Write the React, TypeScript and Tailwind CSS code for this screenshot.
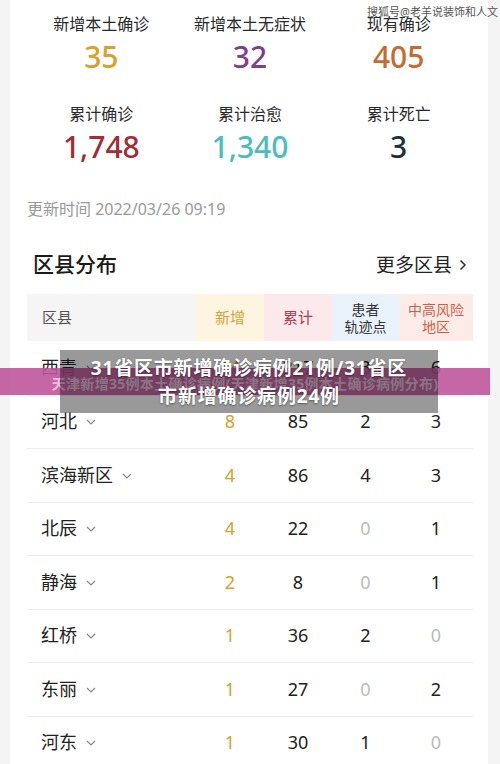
import React from "react";

const FONT = { fontFamily: '"Noto Sans", "Noto Sans CJK SC", sans-serif' };

type Stat = { label: string; value: string; color: string };
const stats1: Stat[] = [
  { label: "新增本土确诊", value: "35", color: "text-[#d9a02a]" },
  { label: "新增本土无症状", value: "32", color: "text-[#7d3e8e]" },
  { label: "现有确诊", value: "405", color: "text-[#c86a2f]" },
];
const stats2: Stat[] = [
  { label: "累计确诊", value: "1,748", color: "text-[#a52b36]" },
  { label: "累计治愈", value: "1,340", color: "text-[#4cbdbd]" },
  { label: "累计死亡", value: "3", color: "text-[#1e3040]" },
];

const rows = [
  ["西青", "14", "217", "3", "6"],
  ["河北", "8", "85", "2", "3"],
  ["滨海新区", "4", "86", "4", "3"],
  ["北辰", "4", "22", "0", "1"],
  ["静海", "2", "8", "0", "1"],
  ["红桥", "1", "36", "2", "0"],
  ["东丽", "1", "27", "0", "2"],
  ["河东", "1", "30", "1", "0"],
];

function Chevron() {
  return (
    <svg width="10" height="6" viewBox="0 0 10 6" className="ml-[9px] mt-[1px]">
      <polyline points="1,1 5,5 9,1" fill="none" stroke="#888" strokeWidth="1.2" />
    </svg>
  );
}

function StatRow({ items, gapTop }: { items: Stat[]; gapTop: string }) {
  return (
    <div className={`grid grid-cols-3 ${gapTop}`}>
      {items.map((s) => (
        <div key={s.label} className="flex flex-col items-center">
          <div className="h-[22px] leading-[22px] text-[16px] text-[#2a2a2a]">{s.label}</div>
          <div className={`mt-[4px] h-[36px] leading-[36px] text-[30px] font-medium ${s.color}`}>{s.value}</div>
        </div>
      ))}
    </div>
  );
}

function Num({ v, gold }: { v: string; gold?: boolean }) {
  const color = gold ? "text-[#d9a02a]" : v === "0" ? "text-[#bbbbbb]" : "text-[#222]";
  return <div className={`flex items-center justify-center text-[18px] ${color}`}>{v}</div>;
}

export default function App() {
  return (
    <div className="relative w-[500px] h-[764px] overflow-hidden bg-[#f4f4f4] pl-[10px] pr-[12px]" style={FONT}>
      <div className="h-full bg-white pl-[17px] pr-[15px]">
        <StatRow items={stats1} gapTop="pt-[13px]" />
        <StatRow items={stats2} gapTop="pt-[28px]" />
        <div className="mt-[34px] h-[20px] leading-[20px] text-[16px] text-[#9a9a9a]">更新时间 2022/03/26 09:19</div>
        <div className="mt-[32px] flex items-center justify-between h-[28px] pl-[6px]">
          <div className="text-[21px] font-medium text-[#1a1a1a]">区县分布</div>
          <div className="flex items-center text-[19px] text-[#222] pr-[6px]">
            更多区县
            <svg width="8" height="12" viewBox="0 0 8 12" className="ml-[7px]">
              <polyline points="1.5,1.5 6,6 1.5,10.5" fill="none" stroke="#333" strokeWidth="1.5" />
            </svg>
          </div>
        </div>
        <div className="mt-[15px] grid grid-cols-[169px_68px_68px_67px_74px] h-[47px] text-[15px]">
          <div className="bg-[#f5f5f5] flex items-center pl-[15px] text-[#555]">区县</div>
          <div className="bg-[#fdf5e0] flex items-center justify-center text-[#d4a23d]">新增</div>
          <div className="bg-[#fbe9eb] flex items-center justify-center text-[#a8404c]">累计</div>
          <div className="bg-[#e9f1fb] flex flex-col items-center justify-center text-[14px] leading-[17px] text-[#333]">
            <span>患者</span>
            <span>轨迹点</span>
          </div>
          <div className="bg-[#fcebe7] flex flex-col items-center justify-center text-[14px] leading-[17px] text-[#cf5f49]">
            <span>中高风险</span>
            <span>地区</span>
          </div>
        </div>
        {rows.map((r, i) => (
          <div
            key={r[0]}
            className={`grid grid-cols-[169px_68px_68px_67px_74px] h-[53.5px] ${i > 0 ? "border-t border-[#eeeeee]" : ""}`}
          >
            <div className="flex items-center pl-[14px] text-[18px] text-[#222]">
              {r[0]}
              <Chevron />
            </div>
            <Num v={r[1]} gold />
            <Num v={r[2]} />
            <Num v={r[3]} />
            <Num v={r[4]} />
          </div>
        ))}
      </div>

      {/* watermark */}
      <div className="absolute top-[4px] left-[367px] text-[11px] text-[#555]">搜狐号@老羊说装饰和人文</div>

      {/* overlay band */}
      <div className="absolute left-0 w-[490px] top-[368px] h-[27px] bg-[#c0579b]/90 flex items-center justify-center">
        <span className="text-[14px] font-bold text-white/60 pt-[4px] tracking-[0.3px]">天津新增35例本土确诊病例(天津新增35例本土确诊病例分布)</span>
      </div>
      <div className="absolute left-[60px] top-[350px] w-[378px] h-[63px] bg-black/40 flex flex-col items-center justify-center">
        <div className="text-[19px] leading-[28px] font-bold text-white tracking-[0.8px] [text-shadow:0_1px_2px_rgba(0,0,0,0.4)] text-center">
          31省区市新增确诊病例21例/31省区
          <br />
          市新增确诊病例24例
        </div>
      </div>
    </div>
  );
}
